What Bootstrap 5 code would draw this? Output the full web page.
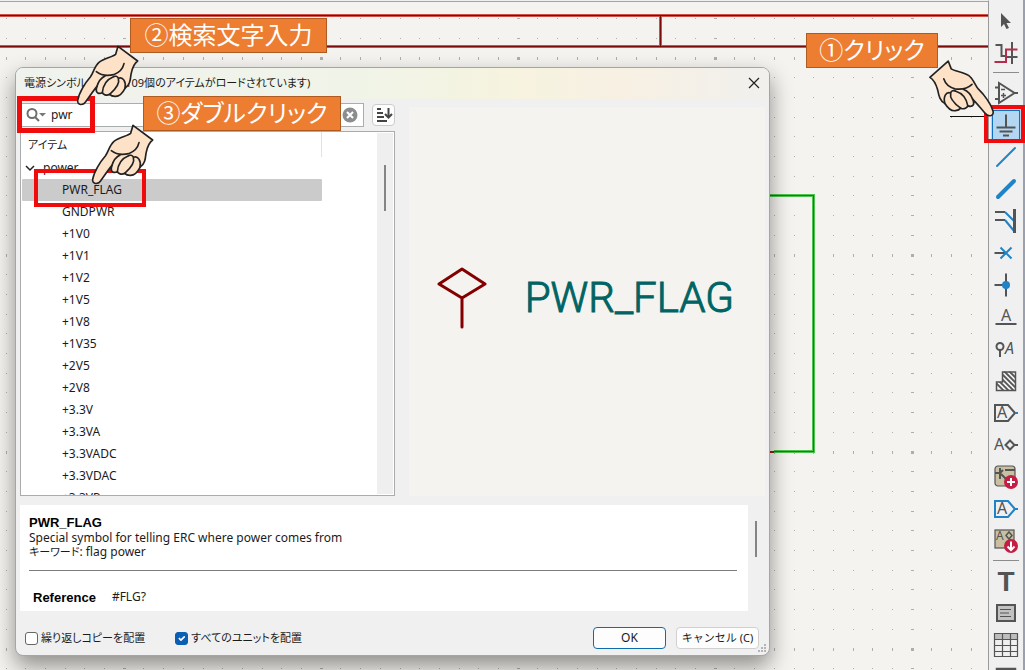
<!DOCTYPE html>
<html lang="ja">
<head>
<meta charset="utf-8">
<meta name="viewport" content="width=device-width, initial-scale=1">
<title>電源シンボルを選択</title>
<link rel="stylesheet" href="https://cdn.jsdelivr.net/npm/bootstrap@5.3.0/dist/css/bootstrap.min.css">
<style>
:root{--ink:#545454;--blue:#1f83c6;--frame:#a9adad;--paper:#f4f3ef}
body{font-family:"Noto Sans","Noto Sans CJK JP",sans-serif;font-size:12px;line-height:16px;color:#1b1b1b;font-feature-settings:"palt"}
.ja{font-size:11px}
.sheet{background:var(--paper);border-top:1px solid #f0f0f0;border-right:1px solid #999;min-width:0}
.tools{width:36px;background:#f0f0f0;border-right:2px solid #9ba0ae;padding-top:5px}
.tool{width:30px;height:32px;border:0;background:none;padding:0;flex:none;display:flex;align-items:center;justify-content:center}
.tool.on{background:#b3d7f3;outline:1px solid #0f6fc0;outline-offset:-2px}
.tool svg{fill:none;stroke:var(--ink);stroke-width:2;overflow:visible}
.tool text{fill:var(--ink);stroke:none;font-family:"Noto Sans",sans-serif;font-size:16px}
.toolsep{width:26px;height:1px;margin:3px 0 4px;background:#8c8c8c;flex:none}
.win{left:15px;top:66px;width:755px;background:#f0f0f0;border:1px solid #a3a6a3;border-radius:8px;box-shadow:0 10px 22px rgba(0,0,0,.42)}
.win-title{height:31px;padding:0 8px 2px;border-radius:7px 7px 0 0;background:linear-gradient(90deg,#f0f2ee,#f0f4e8 45%,#f6f3df 66%,#f7f0e4 82%,#f1f0ee)}
.plain{border:0;background:none;padding:0;line-height:0}
.left-col{width:375px}
.search{height:24px;background:#fff;border:1px solid var(--frame);padding:0 5px}
.search input{border:0;outline:0;padding:0 0 0 5px;font-size:12px;min-width:0;color:#222}
.sortbtn{width:23px;height:22px;background:#fdfdfd;border:1px solid #ccc;border-radius:4px;padding:0;line-height:0}
.tree{height:365px;background:#fff;border:1px solid var(--frame)}
.tree-head{height:25px;padding:5px 7px;width:301px;border-right:1px solid #e2e2e2}
.tree ul{margin:0;padding:0 0 0 1px;list-style:none}
.tree li{height:22px;line-height:22px;padding-left:40px;width:300px}
.tree li.top-node{padding-left:3px}
.tree li.picked{background:#cbcbcb;border-radius:1px}
.track{width:16px;background:#efefef;margin:1px}
.thumb{width:2px;background:#858585}
.preview{background:var(--paper);padding:0 31px 8px 28px;margin-left:14px}
.sym-name{font-family:Roboto,"Noto Sans",sans-serif;font-weight:300;font-size:42px;line-height:48px;color:#006464;-webkit-text-stroke:1px #006464}
.info-row{margin-top:9px}
.info{height:106px;background:#fff;padding:10px 11px 0 9px;line-height:14px}
.info h2,.info dt{font-family:"Liberation Sans",sans-serif;font-weight:700;font-size:13px;line-height:16px;margin:0;color:#000}
.info hr{margin:11px 0 19px;border-top:1px solid #7c7c7c;opacity:1}
.tick{width:13px;height:13px;margin:0 3px 0 0;border:1px solid #666;border-radius:3px}
.tick.form-check-input:checked{background-color:#0a5fb4;border-color:#0a5fb4}
.foot{padding:16px 10px 6px 9px}
.dlgbtn{height:22px;line-height:18px;font-size:12px;padding:0;background:#fdfdfd;border:1px solid #d0d0d0;border-radius:4px;color:#1b1b1b}
.dlgbtn.ja{font-size:11px}
.dlgbtn.main{border-color:#0f6bb0}
.notes{pointer-events:none}
.tip{background:#ed7d31;border:1px solid #ae5a21;color:#fff;font-size:24px;line-height:30px;height:35px;font-family:"Noto Sans CJK JP",sans-serif;white-space:nowrap}
.ring{border:5px solid #f00c0c}
.hand path{stroke:#222;stroke-width:5;stroke-linecap:round;stroke-linejoin:round;fill:none}
.hand path.skin{fill:#fde2c8}
</style>
</head>
<body class="vh-100 overflow-hidden">
<div class="d-flex h-100 position-relative">
  <main class="sheet flex-grow-1 position-relative overflow-hidden">
    <svg class="position-absolute top-0 start-0" width="100%" height="100%" aria-hidden="true" shape-rendering="crispEdges">
      <path d="M0 0H1600" stroke="#a4a4a4" stroke-width="2"/>
      <g id="dots" fill="#aeaeaa"></g>
      <g fill="none" stroke="#d0504a" stroke-width="3"><path d="M0 14.500H1600M0 45.500H1600M660.500 14V46"/></g>
      <g fill="none" stroke="#7c0c0c" stroke-width="1"><path d="M0 14.500H1600M0 45.500H1600M660.500 14V46"/></g>
      <path d="M760 194.500H813.500V450.500H774" fill="none" stroke="#4fc34f" stroke-width="3"/>
      <path d="M760 194.500H813.500V450.500H774" fill="none" stroke="#078a07"/>
      <path d="M760 450.500H774" stroke="#a01818" stroke-width="2"/>
      <path d="M950 115.500H989" stroke="#111"/>
    </svg>

    <section class="win position-absolute d-flex flex-column" role="dialog" aria-labelledby="dlgTitle">
      <header class="win-title d-flex align-items-center justify-content-between">
        <span class="ja" id="dlgTitle">電源シンボルを選択 (109個のアイテムがロードされています)</span>
        <button class="plain" aria-label="閉じる"><svg width="14" height="14" fill="none" stroke="#222" stroke-width="1.200"><path d="M2 2L12 12M12 2L2 12"/></svg></button>
      </header>
      <div class="d-flex px-1">
        <div class="left-col d-flex flex-column">
          <div class="d-flex align-items-center gap-2 py-1">
            <label class="search d-flex align-items-center flex-grow-1">
              <svg width="20" height="16" fill="none" stroke="#6e6e6e" stroke-width="2"><circle cx="6" cy="6.500" r="4.500"/><path d="M9 10L13 14"/><path d="M13 6H20L16.500 9.500Z" fill="#777" stroke="none"/></svg>
              <input class="flex-grow-1" type="text" value="pwr" aria-label="検索">
              <button class="plain" aria-label="クリア"><svg width="16" height="16"><circle cx="8" cy="8" r="7.500" fill="#8c8e8e"/><path d="M5 5L11 11M11 5L5 11" stroke="#fff" stroke-width="2"/></svg></button>
            </label>
            <button class="sortbtn" aria-label="並べ替え"><svg width="18" height="18" fill="none" stroke="#444" stroke-width="2"><path d="M2 3H6M2 7H8M2 11H9M2 15H12M13.500 2V10"/><path d="M10 8L13.500 11.500L17 8"/></svg></button>
          </div>
          <div class="tree d-flex overflow-hidden">
            <div class="flex-grow-1">
              <div class="tree-head ja">アイテム</div>
              <ul>
                <li class="top-node d-flex align-items-center gap-2"><svg width="10" height="8" fill="none" stroke="#222" stroke-width="1.500"><path d="M1 2L5 6L9 2"/></svg>power</li>
                <li class="picked">PWR_FLAG</li><li>GNDPWR</li><li>+1V0</li><li>+1V1</li><li>+1V2</li><li>+1V5</li><li>+1V8</li><li>+1V35</li><li>+2V5</li><li>+2V8</li><li>+3.3V</li><li>+3.3VA</li><li>+3.3VADC</li><li>+3.3VDAC</li><li>+3.3VP</li>
              </ul>
            </div>
            <div class="track d-flex justify-content-center"><div class="thumb" style="height:46px;margin-top:32px"></div></div>
          </div>
        </div>
        <div class="preview flex-grow-1 d-flex align-items-center mt-2">
          <svg width="50" height="62" fill="none" stroke="#840000" stroke-width="3" stroke-linecap="round" stroke-linejoin="round"><path d="M25 2L48 17L25 31L2 17ZM25 31V60"/></svg>
          <span class="sym-name ms-auto">PWR_FLAG</span>
        </div>
      </div>
      <div class="info-row d-flex ps-1">
        <div class="info flex-grow-1">
          <h2>PWR_FLAG</h2>
          <div>Special symbol for telling ERC where power comes from</div>
          <div><span class="ja">キーワード</span>: flag power</div>
          <hr>
          <dl class="d-flex gap-3 ps-1 m-0"><dt>Reference</dt><dd class="m-0">#FLG?</dd></dl>
        </div>
        <div class="d-flex justify-content-center" style="width:21px"><div class="thumb" style="height:36px;margin:16px 5px 0 0"></div></div>
      </div>
      <footer class="foot d-flex align-items-center">
        <input class="tick form-check-input" type="checkbox" id="rep"><label class="ja" for="rep">繰り返しコピーを配置</label>
        <input class="tick form-check-input" style="margin-left:30px" type="checkbox" id="units" checked><label class="ja" for="units">すべてのユニットを配置</label>
        <div class="d-flex ms-auto" style="gap:10px">
          <button class="btn dlgbtn main" style="width:73px">OK</button>
          <button class="btn dlgbtn ja" style="width:83px">キャンセル (C)</button>
        </div>
      </footer>
      <svg class="position-absolute bottom-0 end-0" width="12" height="12" fill="#b4b4b4" aria-hidden="true"><path d="M7 1h2v2h-2zM7 4h2v2h-2zM7 7h2v2h-2zM4 4h2v2h-2zM4 7h2v2h-2zM1 7h2v2h-2z"/></svg>
    </section>
  </main>

  <nav class="tools d-flex flex-column align-items-center overflow-hidden" aria-label="ツール">
    <button class="tool" aria-label="選択"><svg width="24" height="24"><path d="M7 4V18L10 15L12.500 20L15 19L12.500 14H17Z" fill="#545454" stroke="none"/></svg></button>
    <button class="tool" aria-label="ネットをハイライト"><svg width="24" height="24"><path d="M1.500 4H7.500V15H11M18 1V23M13 16H23.500"/><path d="M0.500 21H12V8.500H23.500" stroke="#b52c4c"/></svg></button>
    <div class="toolsep"></div>
    <button class="tool" aria-label="シンボル"><svg width="24" height="24"><path d="M5 2V22L20.500 12ZM1 6.500H5M1 18H5M20 12H24"/><path d="M7 8.500H11M7 14.500H12M9.500 12V17" stroke-width="1.500"/></svg></button>
    <button class="tool on" aria-label="電源シンボル"><svg width="24" height="24"><path d="M12 1.500V14M2.500 14.500H21.500M5.500 18.500H18.500M9 22.500H15"/></svg></button>
    <button class="tool" aria-label="配線"><svg width="24" height="24"><path d="M3 21L21 3" stroke="#1f83c6" stroke-linecap="round"/></svg></button>
    <button class="tool" aria-label="バス"><svg width="24" height="24"><path d="M4 20L20 4" stroke="#1f83c6" stroke-width="4" stroke-linecap="round"/></svg></button>
    <button class="tool" aria-label="バスエントリー"><svg width="24" height="24"><path d="M1 3H11M1 11H11"/><path d="M11 3L20 12M11 11L20 22" stroke="#1f83c6"/><path d="M20.500 0V24" stroke-width="3"/></svg></button>
    <button class="tool" aria-label="未接続"><svg width="24" height="24"><path d="M0.500 12H11"/><path d="M6.500 6.500L17.500 17.500M17.500 6.500L6.500 17.500" stroke="#1f83c6"/></svg></button>
    <button class="tool" aria-label="ジャンクション"><svg width="24" height="24"><path d="M0.500 12H12M12 0.500V23.500"/><circle cx="12" cy="12" r="4" fill="#1f83c6" stroke="none"/></svg></button>
    <button class="tool" aria-label="ラベル"><svg width="24" height="24"><text x="12" y="16" text-anchor="middle">A</text><path d="M1.500 19H22.500"/></svg></button>
    <button class="tool" aria-label="ディレクティブ"><svg width="24" height="24"><circle cx="6" cy="9.500" r="3.500"/><path d="M6 13V20"/><text x="11" y="17" font-style="italic">A</text></svg></button>
    <button class="tool" aria-label="ルールエリア"><svg width="24" height="24"><defs><clipPath id="ra"><path d="M2 13H8.500V2.500H22V22H2Z"/></clipPath></defs><path clip-path="url(#ra)" stroke-width="1.800" d="M-10 2L14 26M-5 2L19 26M0 2L24 26M5 2L29 26M10 2L34 26M15 2L39 26"/><path d="M2.500 13H8.500V3H21.500V21.500H2.500Z" stroke-width="1.500"/></svg></button>
    <button class="tool" aria-label="グローバルラベル"><svg width="24" height="24"><path d="M1 4H14L21 12L14 20H1Z"/><path d="M21 12H24" stroke="#1f83c6"/><text x="8" y="17" text-anchor="middle">A</text></svg></button>
    <button class="tool" aria-label="階層ラベル"><svg width="24" height="24"><text x="0" y="17">A</text><path d="M16 7.500L20.500 12L16 16.500L11.500 12ZM20.500 12H24"/></svg></button>
    <button class="tool" aria-label="階層シート"><svg width="24" height="24"><rect x="1" y="1" width="20" height="20" rx="3" fill="#c9c0a2" stroke-width="1.200"/><path d="M1 8H6L9 5M6 3V14M7 9L12 14M11 5H21"/><circle cx="17" cy="17" r="7" fill="#c41e44" stroke="none"/><path d="M17 13V21M13 17H21" stroke="#fff"/></svg></button>
    <button class="tool" aria-label="シートピン"><svg width="24" height="24"><path d="M1 4H14L21 12L14 20H1ZM21 12H24" stroke="#1f83c6"/><text x="8" y="17" text-anchor="middle">A</text></svg></button>
    <button class="tool" aria-label="シートピンをインポート"><svg width="24" height="24"><rect x="1" y="1" width="19" height="18" fill="#c9c0a2" stroke-width="1.200"/><text x="2" y="11" style="font-size:12px">A</text><path d="M15 3L18 6.500L15 10L12 6.500Z" stroke-width="1.500"/><circle cx="17" cy="17" r="7" fill="#c41e44" stroke="none"/><path d="M17 12.500V21M13.500 17.500L17 21L20.500 17.500" stroke="#fff"/></svg></button>
    <div class="toolsep"></div>
    <button class="tool" aria-label="テキスト"><svg width="24" height="24"><text x="12" y="22" text-anchor="middle" style="font:700 28px 'Liberation Sans',sans-serif">T</text></svg></button>
    <button class="tool" aria-label="テキストボックス"><svg width="24" height="24"><rect x="3" y="4" width="18" height="16" fill="#c2c2c2"/><path d="M6 8.500H17M6 12H15M6 15.500H17" stroke-width="1.200"/></svg></button>
    <button class="tool" aria-label="表"><svg width="24" height="24"><path d="M0.500 0.500H23.500V6H0.500Z" fill="#bdbdbd" stroke="none"/><path d="M0.500 0.500H23.500V23.500H0.500ZM0.500 6.500H23.500M0.500 12.500H23.500M0.500 18.500H23.500M8.500 0V24M16.500 0V24" stroke-width="1.200"/></svg></button>
    <button class="tool" aria-label="四角形"><svg width="24" height="24"><path d="M3 4H21V20H3Z" stroke-width="2.500"/></svg></button>
  </nav>

  <!-- step callouts lying over the window -->
  <div class="notes position-absolute top-0 start-0 w-100 h-100">
    <div class="ring position-absolute" style="left:17px;top:96px;width:78px;height:37px"></div>
    <div class="ring position-absolute" style="left:34px;top:169px;width:112px;height:38px;border-width:4px"></div>
    <div class="ring position-absolute" style="right:0;top:105px;width:41px;height:38px;border-width:4px"></div>
    <div class="tip position-absolute text-center" style="left:130px;top:18px;width:197px">②検索文字入力</div>
    <div class="tip position-absolute text-center" style="left:143px;top:96px;width:198px">③ダブルクリック</div>
    <div class="tip position-absolute text-center" style="right:87px;top:33px;width:132px">①クリック</div>
    <svg class="hand position-absolute" style="left:75px;top:43px" width="67" height="64" viewBox="0 0 201 192">
      <g id="hand">
        <path class="skin" d="M129 10L188 54C176 62 171 78 168 94C166 112 164 128 150 136C143 150 132 161 120 160C114 160 108 158 104 154C94 160 84 154 82 149C72 154 62 150 64 138L66 130C54 144 44 160 33 175C25 188 6 188 8 172C12 150 30 120 46 102C55 90 58 70 72 58C88 46 112 42 122 34Z"/>
        <path d="M147 62C143 80 130 90 116 95C98 99 78 97 64 86M66 130C70 116 76 106 90 99M82 149C84 128 94 110 114 102M104 154C118 142 136 124 130 106C128 99 120 98 114 102M130 106C144 100 154 116 150 136"/>
      </g>
    </svg>
    <svg class="hand position-absolute" style="left:90px;top:122px" width="67" height="64" viewBox="0 0 201 192"><use href="#hand"/></svg>
    <svg class="hand position-absolute" style="right:28px;top:54px" width="70" height="64" viewBox="0 0 210 192"><g transform="translate(207 0) scale(-1 1) rotate(5 8 180)"><use href="#hand"/></g></svg>
  </div>
</div>
<script src="https://cdn.jsdelivr.net/npm/bootstrap@5.3.0/dist/js/bootstrap.bundle.min.js"></script>
<script>
// Schematic grid: a dot per step, a longer mark on every tenth row and column
const g = document.getElementById('dots'), step = 19.7;
for (let i = -6; i < 80; i++) for (let j = -2; j < 50; j++) {
  const w = i % 10 ? 1 : 3, h = j % 10 ? 1 : 3;
  const r = document.createElementNS('http://www.w3.org/2000/svg', 'rect');
  r.setAttribute('x', Math.round(123.700 + i * step) - (w >> 1));
  r.setAttribute('y', Math.round(56.500 + j * step) - (h >> 1));
  r.setAttribute('width', w);
  r.setAttribute('height', h);
  g.append(r);
}
</script>
</body>
</html>
